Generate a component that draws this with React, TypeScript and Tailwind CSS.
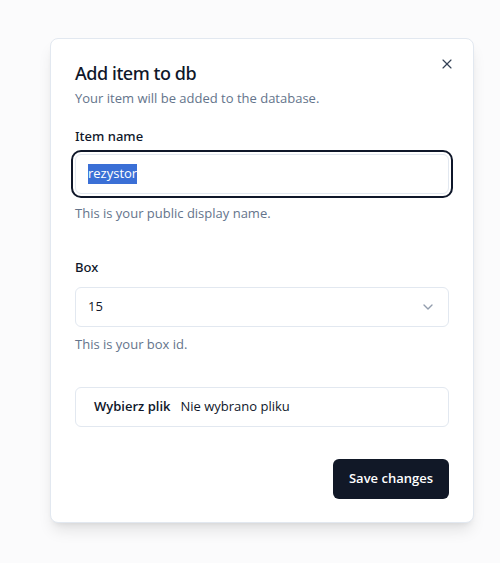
import React from 'react';
import { X, ChevronDown } from 'lucide-react';

export default function App() {
  return (
    <div className="min-h-[563px] w-[500px] bg-[#fbfbfc] pt-[38px] pl-[50px] [font-family:'Open_Sans','Noto_Sans',sans-serif]">
      <div className="relative w-[424px] rounded-lg border border-[#e2e8f0] bg-white px-6 pt-[25px] pb-[23px] shadow-lg">
        <button className="absolute right-[18px] top-[17px] text-[#334155]">
          <X className="h-4 w-4" strokeWidth={1.75} />
        </button>

        <div className="flex flex-col gap-[7px]">
          <h2 className="text-[18px] font-medium leading-none tracking-tight text-[#0f172a] [font-family:'Noto_Sans',sans-serif]">
            Add item to db
          </h2>
          <p className="text-[13px] text-[#64748b]">Your item will be added to the database.</p>
        </div>

        <div className="mt-[18px] flex flex-col">
          <label className="text-[13px] font-medium text-[#0f172a] [font-family:'Noto_Sans',sans-serif]">Item name</label>
          <div className="mt-2 flex h-[40px] items-center rounded-md border border-[#e2e8f0] bg-white px-3 text-[13px] outline-2 outline-offset-2 outline-[#0f172a]">
            <span className="bg-[#3a6fd6] text-white">rezystor</span>
          </div>
          <p className="mt-[10px] text-[13px] text-[#64748b]">This is your public display name.</p>
        </div>

        <div className="mt-[34px] flex flex-col">
          <label className="text-[13px] font-medium text-[#0f172a] [font-family:'Noto_Sans',sans-serif]">Box</label>
          <div className="mt-[10px] flex h-[40px] items-center justify-between rounded-md border border-[#e2e8f0] bg-white px-3 text-[13px] text-[#0f172a]">
            <span>15</span>
            <ChevronDown className="h-4 w-4 text-[#64748b] opacity-70" />
          </div>
          <p className="mt-[8px] text-[13px] text-[#64748b]">This is your box id.</p>
        </div>

        <div className="mt-[32px] flex h-[40px] items-center rounded-md border border-[#e2e8f0] bg-white px-[18px] text-[13px] text-[#0f172a]">
          <span className="font-semibold">Wybierz plik</span>
          <span className="ml-[10px]">Nie wybrano pliku</span>
        </div>

        <div className="mt-[32px] flex justify-end">
          <button className="h-[40px] rounded-md bg-[#111827] px-4 text-[13px] font-semibold text-white">
            Save changes
          </button>
        </div>
      </div>
    </div>
  );
}
